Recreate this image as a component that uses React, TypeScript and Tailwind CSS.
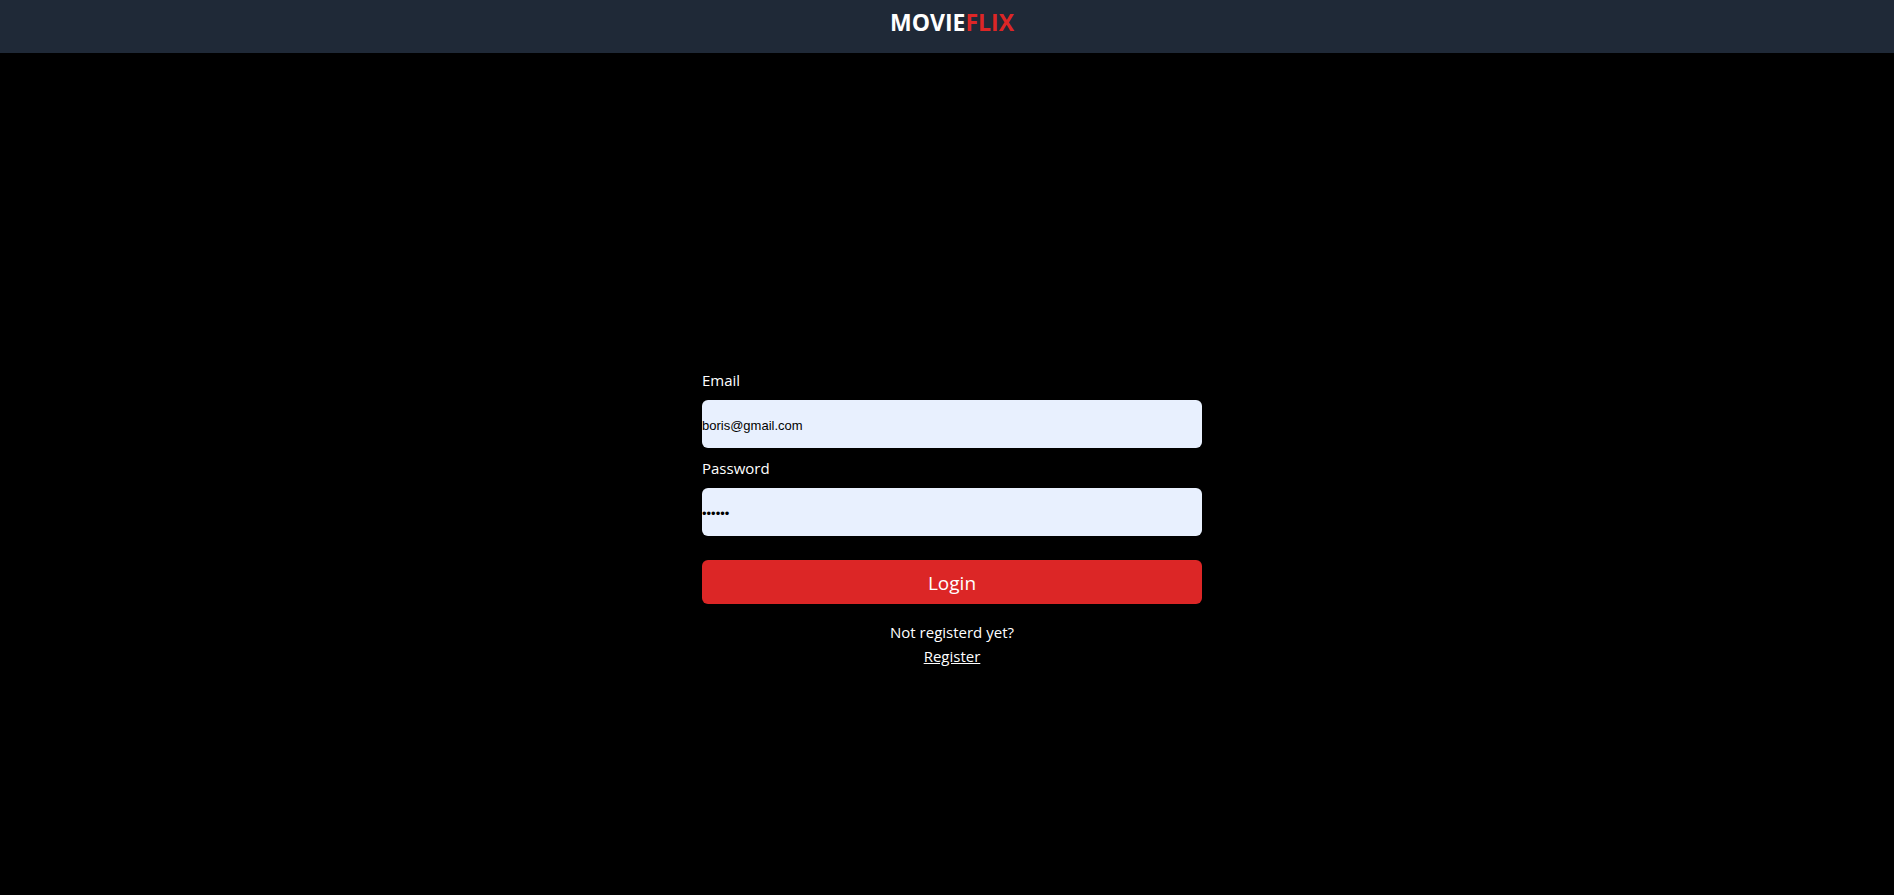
import { useState } from "react";

const inputClass =
  "h-12 w-full rounded-md bg-[#e8f0fe] px-0 pt-[2px] pb-0 font-['Liberation_Sans',Arial,sans-serif] text-[13px] text-black outline-none";

export default function App() {
  const [email, setEmail] = useState("boris@gmail.com");
  const [password, setPassword] = useState("secret");

  return (
    <div className="flex min-h-screen flex-col bg-black font-['Open_Sans','Noto_Sans',sans-serif] text-[15px] leading-6 text-white">
      <header className="flex justify-center bg-[#1f2937] pt-2 pb-[17px] pl-[10px]">
        <h1 className="text-[23px] leading-7 font-bold">
          MOVIE<span className="text-[#dc2626]">FLIX</span>
        </h1>
      </header>
      <main className="flex flex-1 flex-col items-center pt-[315px] pl-[10px]">
        <form
          className="flex w-full max-w-[500px] flex-col gap-2"
          onSubmit={(event) => event.preventDefault()}
        >
          <label htmlFor="email">Email</label>
          <input
            id="email"
            type="email"
            className={inputClass}
            value={email}
            onChange={(event) => setEmail(event.target.value)}
          />
          <label htmlFor="password">Password</label>
          <input
            id="password"
            type="password"
            className={inputClass}
            value={password}
            onChange={(event) => setPassword(event.target.value)}
          />
          <button
            type="submit"
            className="mt-4 h-11 w-full cursor-pointer rounded-md bg-[#dc2626] pt-[2px] text-[19px] leading-7"
          >
            Login
          </button>
        </form>
        <div className="mt-4 flex flex-col items-center">
          <p>Not registerd yet?</p>
          <a href="#register" className="underline">
            Register
          </a>
        </div>
      </main>
    </div>
  );
}
